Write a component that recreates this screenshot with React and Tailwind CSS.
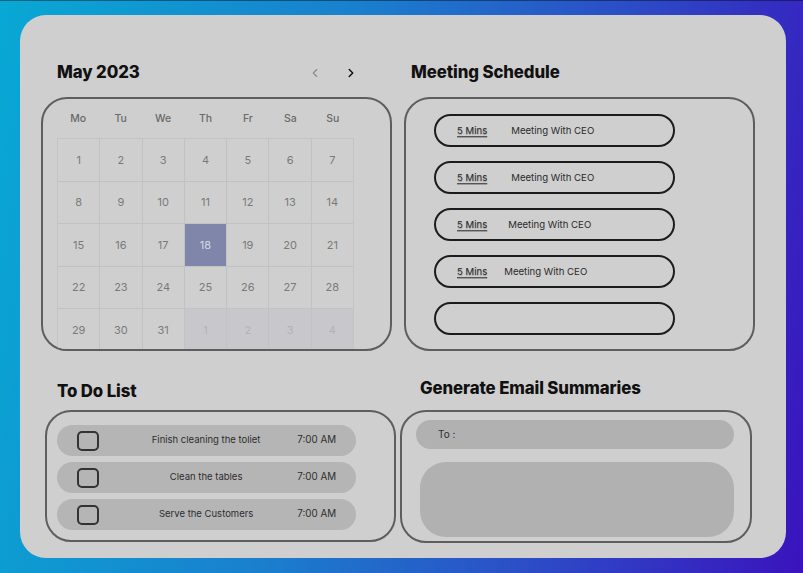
import React from "react";
import { ChevronLeft, ChevronRight } from "lucide-react";

const weekdays = ["Mo", "Tu", "We", "Th", "Fr", "Sa", "Su"];

function Calendar() {
  const cells = [];
  for (let i = 1; i <= 31; i++) cells.push({ n: i, cur: true });
  for (let i = 1; i <= 4; i++) cells.push({ n: i, cur: false });
  return (
    <div className="w-[351px] h-[254px] rounded-[26px] border-2 border-[#5e5e5e] overflow-hidden pl-[14px]">
      <div className="grid grid-cols-7 w-[297px] h-[39px] items-center text-[10.5px] font-medium text-[#6a6a6a]">
        {weekdays.map((d) => (
          <div key={d} className="text-center">{d}</div>
        ))}
      </div>
      <div className="grid grid-cols-7 w-[297px] gap-[1px] bg-[#c2c2c2] border border-[#c4c4c4]">
        {cells.map((c, i) => {
          const sel = c.cur && c.n === 18;
          const cls = sel
            ? "bg-[#7f86aa] text-[#d4d8e6]"
            : c.cur
            ? "bg-[#cfcfcf] text-[#7a7a7a]"
            : "bg-[#c8c8cc] text-[#b2b2b6]";
          return (
            <div key={i} className={"h-[41.5px] flex items-center justify-center text-[11px] " + cls}>
              {c.n}
            </div>
          );
        })}
      </div>
    </div>
  );
}

function Meeting({ gap }) {
  return (
    <div className="w-[241px] h-[33px] rounded-full border-2 border-[#1c1c1c] flex items-center pl-[21px] pt-[1px] text-[9.6px] text-[#2a2a2a]">
      <span className="underline underline-offset-2 decoration-[#555] [text-shadow:0_1px_1px_rgba(0,0,0,0.25)]">5 Mins</span>
      <span className={gap}>Meeting With CEO</span>
    </div>
  );
}

function Todo({ text }) {
  return (
    <div className="w-[299px] h-[31px] rounded-full bg-[#b5b5b5] flex items-center pl-[20px] pr-[20px] text-[9.5px] text-[#2e2e2e]">
      <div className="w-[22px] h-[20px] rounded-[5px] border-2 border-[#333] shrink-0" />
      <div className="flex-1 text-center pl-[16px]">{text}</div>
      <div className="text-[9.8px]">7:00 AM</div>
    </div>
  );
}

const titleCls = "text-[16.8px] font-extrabold text-[#111] tracking-[-0.1px]";

export default function App() {
  return (
    <div className="w-full h-[573px] bg-[linear-gradient(100deg,#08a8d4_0%,#1a7fcd_40%,#2c4cc6_70%,#3a13bd_100%)] font-['Inter',sans-serif] overflow-hidden">
      <div className="h-[1px] bg-black/40" />
      <div className="pt-[14px] pl-[20px]">
        <div className="w-[766px] h-[543px] rounded-[26px] bg-[#cfcfcf] pt-[46px]">
          {/* Row 1 */}
          <div className="flex pl-[21px]">
            <div className="flex flex-col gap-[12px]">
              <div className="h-[24px] flex items-center pl-[16px] pr-[34px]">
                <div className={titleCls}>May 2023</div>
                <div className="ml-auto flex items-center gap-[22px]">
                  <ChevronLeft size={14} strokeWidth={2} className="text-[#8a8a8a]" />
                  <ChevronRight size={14} strokeWidth={2.5} className="text-[#111]" />
                </div>
              </div>
              <Calendar />
            </div>
            <div className="flex flex-col gap-[12px] ml-[12px]">
              <div className="h-[24px] flex items-center pl-[7px]">
                <div className={titleCls}>Meeting Schedule</div>
              </div>
              <div className="w-[351px] h-[254px] rounded-[26px] border-2 border-[#5e5e5e] pl-[28px] pt-[15px] flex flex-col gap-[14px]">
                <Meeting gap="ml-[24px]" />
                <Meeting gap="ml-[24px]" />
                <Meeting gap="ml-[21px]" />
                <Meeting gap="ml-[17px]" />
                <div className="w-[241px] h-[33px] rounded-full border-2 border-[#1c1c1c]" />
              </div>
            </div>
          </div>
          {/* Row 2 */}
          <div className="flex mt-[27px] pl-[25px]">
            <div className="flex flex-col gap-[8px]">
              <div className="h-[24px] flex items-center pl-[12px] pt-[3px]">
                <div className={titleCls}>To Do List</div>
              </div>
              <div className="w-[351px] h-[132px] rounded-[26px] border-2 border-[#5e5e5e] pl-[10px] pt-[13px] flex flex-col gap-[6px]">
                <Todo text="Finish cleaning the toliet" />
                <Todo text="Clean the tables" />
                <Todo text="Serve the Customers" />
              </div>
            </div>
            <div className="flex flex-col gap-[8px] ml-[4px]">
              <div className="h-[24px] flex items-center pl-[20px] pb-[2px]">
                <div className={titleCls}>Generate Email Summaries</div>
              </div>
              <div className="w-[352px] h-[133px] rounded-[26px] border-2 border-[#5e5e5e] pt-[8px] pr-[16px] flex flex-col">
                <div className="ml-[14px] h-[29px] rounded-full bg-[#b1b1b1] flex items-center pl-[22px] text-[10px] text-[#2e2e2e]">To :</div>
                <div className="ml-[18px] mt-[13px] h-[75px] rounded-[26px] bg-[#b1b1b1]" />
              </div>
            </div>
          </div>
        </div>
      </div>
    </div>
  );
}
